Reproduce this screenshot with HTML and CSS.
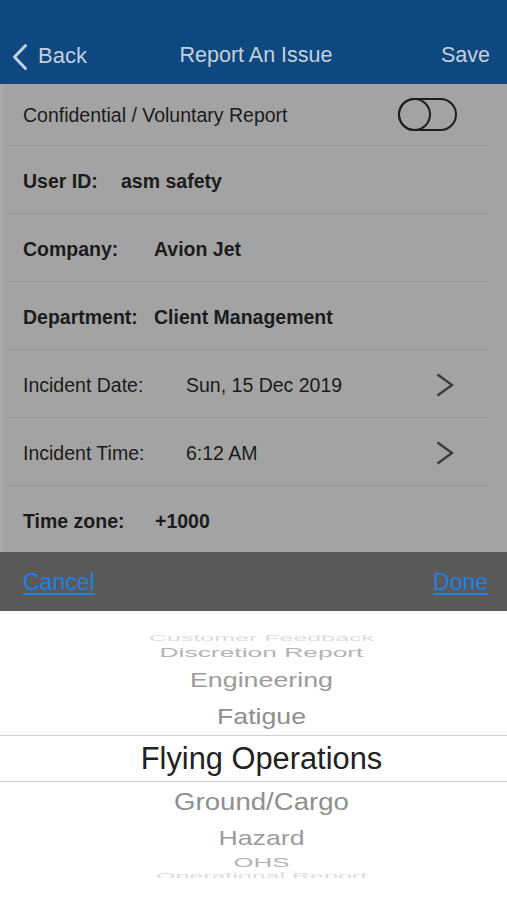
FILE: index.html
```html
<!DOCTYPE html>
<html>
<head>
<meta charset="utf-8">
<link rel="stylesheet" href="styles.css">
</head>
<body>
<div class="screen">
  <header class="nav">
    <div class="nav-back">
      <svg class="back-chev" width="16" height="28" viewBox="0 0 16 28"><path d="M13.5 2.5 L2.5 14 L13.5 25.5" fill="none" stroke="#c6cfdb" stroke-width="3" stroke-linecap="round" stroke-linejoin="round"/></svg>
      <span>Back</span>
    </div>
    <div class="nav-title">Report An Issue</div>
    <div class="nav-save">Save</div>
  </header>

  <main class="form">
    <div class="row first">
      <span class="label">Confidential / Voluntary Report</span>
      <span class="toggle"><span class="knob"></span></span>
    </div>
    <div class="row bold">
      <span class="label w-user">User ID:</span>
      <span class="value">asm safety</span>
    </div>
    <div class="row bold">
      <span class="label w-comp">Company:</span>
      <span class="value">Avion Jet</span>
    </div>
    <div class="row bold">
      <span class="label w-comp">Department:</span>
      <span class="value">Client Management</span>
    </div>
    <div class="row">
      <span class="label w-date">Incident Date:</span>
      <span class="value">Sun, 15 Dec 2019</span>
      <svg class="chev" width="18" height="24" viewBox="0 0 18 24"><path d="M1.5 1.5 L16 12 L1.5 22.5" fill="none" stroke="#3a3a3a" stroke-width="2.4"/></svg>
    </div>
    <div class="row">
      <span class="label w-date">Incident Time:</span>
      <span class="value">6:12 AM</span>
      <svg class="chev" width="18" height="24" viewBox="0 0 18 24"><path d="M1.5 1.5 L16 12 L1.5 22.5" fill="none" stroke="#3a3a3a" stroke-width="2.4"/></svg>
    </div>
    <div class="row bold last">
      <span class="label w-tz">Time zone:</span>
      <span class="value">+1000</span>
    </div>
  </main>

  <div class="toolbar">
    <a class="tb-link">Cancel</a>
    <a class="tb-link">Done</a>
  </div>

  <div class="picker">
    <div class="band"></div>
    <div class="p-row r0"><span>Customer Feedback</span></div>
    <div class="p-row r1"><span>Discretion Report</span></div>
    <div class="p-row r2"><span>Engineering</span></div>
    <div class="p-row r3"><span>Fatigue</span></div>
    <div class="p-row sel"><span>Flying Operations</span></div>
    <div class="p-row r5"><span>Ground/Cargo</span></div>
    <div class="p-row r6"><span>Hazard</span></div>
    <div class="p-row r7"><span>OHS</span></div>
    <div class="p-row r8"><span>Operational Report</span></div>
  </div>
</div>
</body>
</html>
```

FILE: styles.css
```css
* { box-sizing: border-box; }
html, body { margin: 0; padding: 0; }
body {
  font-family: "Liberation Sans", Arial, sans-serif;
  background: #ffffff;
}
.screen {
  width: 507px;
  height: 900px;
  overflow: hidden;
  display: flex;
  flex-direction: column;
}

/* nav */
.nav {
  height: 84px;
  flex: none;
  background: #0d4880;
  padding: 27px 17px 0 12px;
  display: flex;
  align-items: center;
  justify-content: space-between;
  color: #c6cfdb;
  font-size: 21.5px;
}
.nav-back {
  display: flex;
  align-items: center;
  gap: 10px;
  font-size: 22px;
  width: 120px;
}
.back-chev { display: block; margin-top: 3px; }
.nav-title { margin-left: 10px; }
.nav-save { width: 120px; text-align: right; }

/* form */
.form {
  flex: none;
  height: 468px;
  background: #a3a3a3;
  border-left: 3px solid #a9a9a9;
  display: flex;
  flex-direction: column;
  color: #1b1b1b;
  font-size: 19.5px;
}
.row {
  height: 68px;
  flex: none;
  margin: 0 19px 0 5px;
  padding-left: 15px;
  padding-top: 4px;
  border-bottom: 1px solid #959595;
  display: flex;
  align-items: center;
  position: relative;
}
.row.first { height: 62px; padding-top: 2px; }
.row.last { border-bottom: none; height: 66px; padding-top: 4px; }
.row.bold { font-weight: bold; }
.label { flex: none; }
.w-user { width: 98px; }
.w-comp { width: 131px; }
.w-date { width: 163px; }
.w-tz { width: 132px; }
.value { flex: 1; }

.toggle {
  position: absolute;
  right: 31px;
  top: 14px;
  width: 59px;
  height: 33px;
  border: 2px solid #1e1e1e;
  border-radius: 17px;
}
.knob {
  position: absolute;
  left: -2px;
  top: -2px;
  width: 33px;
  height: 33px;
  border: 2px solid #1e1e1e;
  border-radius: 50%;
}
.chev {
  position: absolute;
  right: 34px;
  top: 23px;
}

/* toolbar */
.toolbar {
  flex: none;
  height: 59px;
  background: #595959;
  display: flex;
  align-items: center;
  justify-content: space-between;
  padding: 2px 19px 0 23px;
  font-size: 23px;
}
.tb-link {
  color: #1f80e6;
  text-decoration: underline;
  text-underline-offset: 3px;
}

/* picker */
.picker {
  flex: 1;
  background: #ffffff;
  position: relative;
  display: flex;
  flex-direction: column;
  padding: 24px 0 0 16px;
}
.band {
  position: absolute;
  left: 0;
  right: 0;
  top: 124px;
  height: 47px;
  border-top: 1px solid #cfcfcf;
  border-bottom: 1px solid #cfcfcf;
}
.p-row {
  flex: none;
  display: flex;
  justify-content: center;
  align-items: center;
  overflow: visible;
  white-space: nowrap;
}
.p-row span { display: block; line-height: 1; }
.r0 { height: 7px; overflow: hidden; align-items: flex-end; }
.r0 span { font-size: 25px; color: #dcdcdc; transform: scaleY(0.35); transform-origin: center bottom; }
.r1 { height: 22px; }
.r1 span { font-size: 26.4px; color: #b3b3b3; transform: scaleY(0.45); }
.r2 { height: 32px; }
.r2 span { font-size: 26.8px; color: #9b9b9b; transform: scaleY(0.74); }
.r3 { height: 40px; }
.r3 span { font-size: 26.7px; color: #8f8f8f; transform: scaleY(0.86); }
.sel { height: 46px; }
.sel span { font-size: 30.8px; color: #222222; }
.r5 { height: 40px; }
.r5 span { font-size: 27.6px; color: #8f8f8f; transform: scaleY(0.86); }
.r6 { height: 32px; }
.r6 span { font-size: 26.7px; color: #9b9b9b; transform: scaleY(0.74); }
.r7 { height: 18px; }
.r7 span { font-size: 25.8px; color: #b3b3b3; transform: scaleY(0.5); }
.r8 { height: 6px; overflow: hidden; align-items: flex-start; }
.r8 span { font-size: 25px; color: #dcdcdc; transform: scaleY(0.35); transform-origin: center top; }
```
